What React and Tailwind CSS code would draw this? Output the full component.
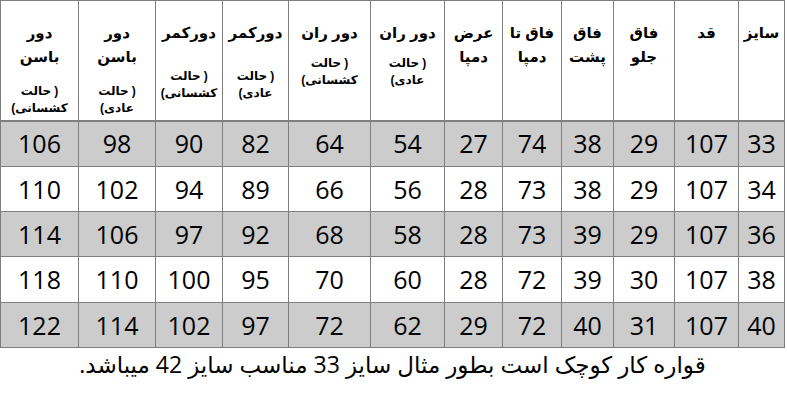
import React from 'react'

const cols = [46, 64, 61, 52, 59, 58, 74, 82, 66, 67, 77, 78]

// main: header title lines, sub: second word of "(حالت ...)", gap: space before sub
const headers = [
  { main: ['سایز'] },
  { main: ['قد'] },
  { main: ['فاق', 'جلو'] },
  { main: ['فاق', 'پشت'] },
  { main: ['فاق تا', 'دمپا'] },
  { main: ['عرض', 'دمپا'] },
  { main: ['دور ران'], sub: 'عادی', gap: 'mt-[10px]' },
  { main: ['دور ران'], sub: 'کشسانی', gap: 'mt-[10px]' },
  { main: ['دورکمر'], sub: 'عادی', gap: 'mt-[23px]' },
  { main: ['دورکمر'], sub: 'کشسانی', gap: 'mt-[23px]' },
  { main: ['دور', 'باسن'], sub: 'عادی', gap: 'mt-[14px]' },
  { main: ['دور', 'باسن'], sub: 'کشسانی', gap: 'mt-[14px]' },
]

const rows = [
  [33, 107, 29, 38, 74, 27, 54, 64, 82, 90, 98, 106],
  [34, 107, 29, 38, 73, 28, 56, 66, 89, 94, 102, 110],
  [36, 107, 29, 39, 73, 28, 58, 68, 92, 97, 106, 114],
  [38, 107, 30, 39, 72, 28, 60, 70, 95, 100, 110, 118],
  [40, 107, 31, 40, 72, 29, 62, 72, 97, 102, 114, 122],
]

const rowHeights = ['h-[46px]', 'h-[45px]', 'h-[45px]', 'h-[46px]', 'h-[45px]']

export default function App() {
  return (
    <div className="w-[787px] h-[400px] bg-white overflow-hidden">
      <table dir="rtl" className="w-[784px] table-fixed border-collapse">
        <colgroup>
          {cols.map((w, i) => (
            <col key={i} style={{ width: w }} />
          ))}
        </colgroup>
        <thead>
          <tr className="h-[120px]">
            {headers.map((h, i) => (
              <th
                key={i}
                className="border border-[#7f7f7f] border-b-2 align-top p-0 font-bold text-black"
                style={{ fontFamily: '"Liberation Sans", "DejaVu Sans", sans-serif' }}
              >
                <div className="flex flex-col items-center pt-[20px]">
                  {h.main.map((t, j) => (
                    <span key={j} className="text-[15px] leading-[24px] whitespace-nowrap">{t}</span>
                  ))}
                  {h.sub && (
                    <div className={`flex flex-col items-center text-[12px] leading-[17px] ${h.gap}`}>
                      <div dir="ltr" className="flex flex-row items-center gap-[3px]">
                        <span>حالت</span>
                        <span>)</span>
                      </div>
                      <div dir="ltr" className="flex flex-row items-center">
                        <span>(</span>
                        <span>{h.sub}</span>
                      </div>
                    </div>
                  )}
                </div>
              </th>
            ))}
          </tr>
        </thead>
        <tbody>
          {rows.map((r, i) => (
            <tr key={i} className={`${rowHeights[i]} ${i % 2 === 0 ? 'bg-[#cccccc]' : 'bg-white'}`}>
              {r.map((v, j) => (
                <td
                  key={j}
                  className="border border-[#7f7f7f] p-0 text-center align-middle text-[25px] leading-none text-black"
                  style={{ fontFamily: '"Open Sans", sans-serif' }}
                >
                  {v}
                </td>
              ))}
            </tr>
          ))}
        </tbody>
      </table>
      <p
        dir="rtl"
        className="text-center text-[23px] leading-[32px] text-black mt-[0px] pr-[2px]"
        style={{ fontFamily: '"Open Sans", "DejaVu Sans", sans-serif' }}
      >
        قواره کار کوچک است بطور مثال سایز 33 مناسب سایز 42 میباشد.
      </p>
    </div>
  )
}
